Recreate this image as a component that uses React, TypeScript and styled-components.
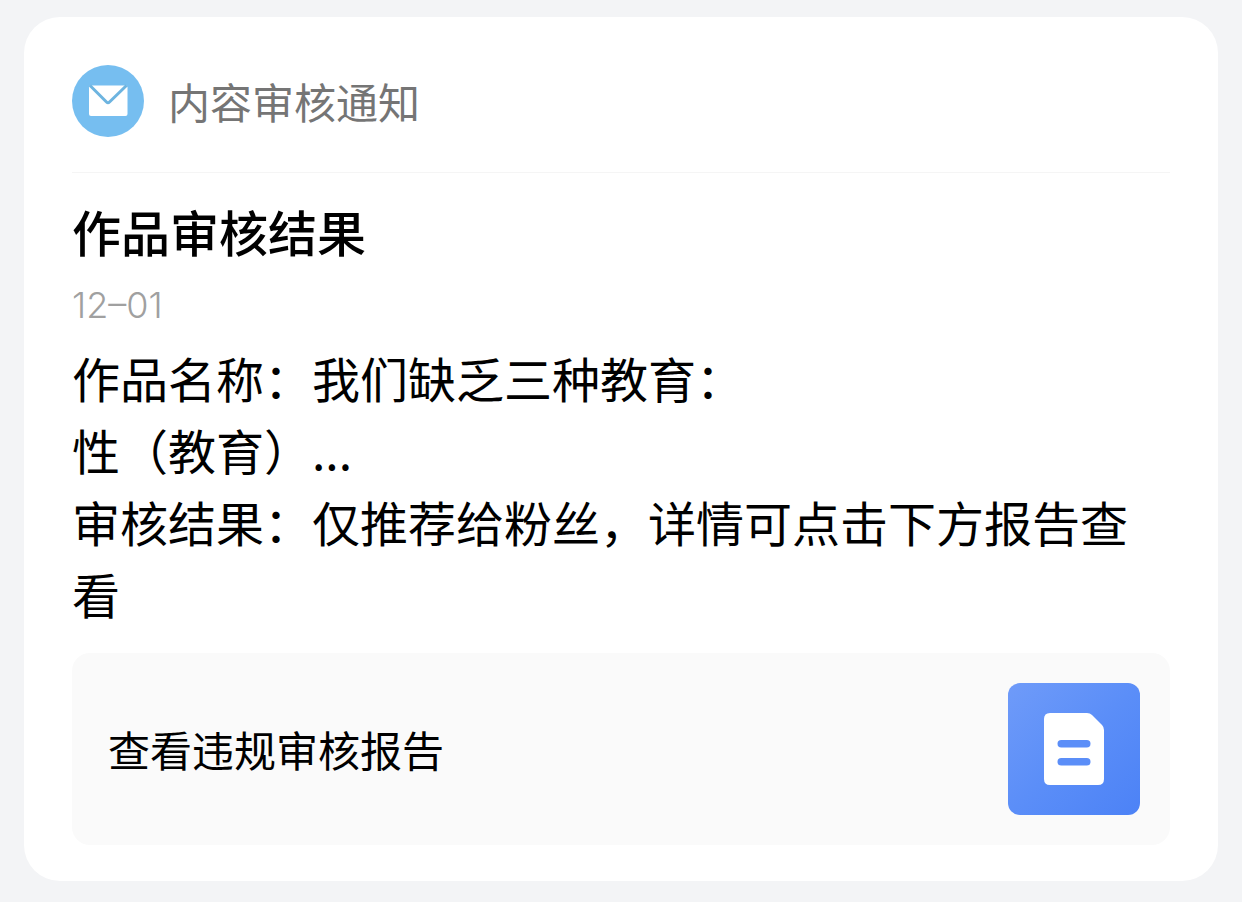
import React from "react";
import styled, { createGlobalStyle } from "styled-components";

const GlobalStyle = createGlobalStyle`
  *, *::before, *::after {
    box-sizing: border-box;
  }
  body {
    margin: 0;
    background: #f3f4f6;
    color: #000;
    font-family: "Noto Sans CJK SC", sans-serif;
  }
`;

const Page = styled.main`
  padding: 17px 24px 21px;
`;

const Card = styled.article`
  padding: 0 48px 36px;
  border-radius: 36px;
  background: #fff;
`;

const CardHeader = styled.header`
  display: flex;
  align-items: center;
  gap: 24px;
  padding: 48px 0 35px;
  border-bottom: 1px solid #f5f5f5;
`;

const MailBadge = styled.svg`
  flex: none;
  width: 72px;
  height: 72px;
`;

const Source = styled.span`
  font-size: 42px;
  line-height: 70px;
  color: #757575;
`;

const Title = styled.h1`
  margin: 22px 0 0;
  font-size: 49px;
  font-weight: 500;
  line-height: 72px;
`;

const PostDate = styled.time`
  display: block;
  margin-top: 14px;
  font-family: Inter, sans-serif;
  font-size: 36px;
  font-weight: 300;
  line-height: 48px;
  color: #a0a0a0;
`;

const Message = styled.div`
  margin-top: 12px;
  font-size: 48px;
  line-height: 72px;
`;

const Line = styled.p`
  margin: 0;
`;

const ReportLink = styled.a`
  display: flex;
  align-items: center;
  justify-content: space-between;
  gap: 24px;
  margin-top: 24px;
  padding: 30px 30px 30px 36px;
  border-radius: 18px;
  background: #fafafa;
  color: #000;
  font-size: 42px;
  line-height: 60px;
  text-decoration: none;
`;

const ReportIcon = styled.svg`
  flex: none;
  width: 132px;
  height: 132px;
`;

export default function App() {
  return (
    <>
      <GlobalStyle />
      <Page lang="zh-CN">
        <Card>
          <CardHeader>
            <MailBadge viewBox="0 0 72 72" aria-hidden="true">
              <circle cx="36" cy="36" r="36" fill="#76bef0" />
              <rect x="17" y="20.5" width="38.5" height="30.5" rx="2" fill="#fff" />
              <path
                d="M18 20.5 34.5 37Q36 38.5 37.5 37L54.5 20.5"
                fill="none"
                stroke="#6db4e0"
                strokeWidth="3"
                strokeLinejoin="round"
              />
            </MailBadge>
            <Source>内容审核通知</Source>
          </CardHeader>
          <Title>作品审核结果</Title>
          <PostDate>12–01</PostDate>
          <Message>
            <Line>作品名称：我们缺乏三种教育：</Line>
            <Line>性（教育）...</Line>
            <Line>审核结果：仅推荐给粉丝，详情可点击下方报告查看</Line>
          </Message>
          <ReportLink href="#report">
            查看违规审核报告
            <ReportIcon viewBox="0 0 132 132" aria-hidden="true">
              <defs>
                <linearGradient id="tile" x1="0" y1="0" x2="1" y2="1">
                  <stop offset="0" stopColor="#6f9bf9" />
                  <stop offset="0.5" stopColor="#5b8ef8" />
                  <stop offset="1" stopColor="#4c82f6" />
                </linearGradient>
              </defs>
              <rect width="132" height="132" rx="12" fill="url(#tile)" />
              <path
                d="M42 30H79Q82 30 84 32L94 42Q96 44 96 47V96Q96 102 90 102H42Q36 102 36 96V36Q36 30 42 30Z"
                fill="#fff"
              />
              <rect x="49.5" y="57" width="33" height="7.5" rx="3.75" fill="#5b8ef8" />
              <rect x="49.5" y="75" width="33" height="7.5" rx="3.75" fill="#5b8ef8" />
            </ReportIcon>
          </ReportLink>
        </Card>
      </Page>
    </>
  );
}
